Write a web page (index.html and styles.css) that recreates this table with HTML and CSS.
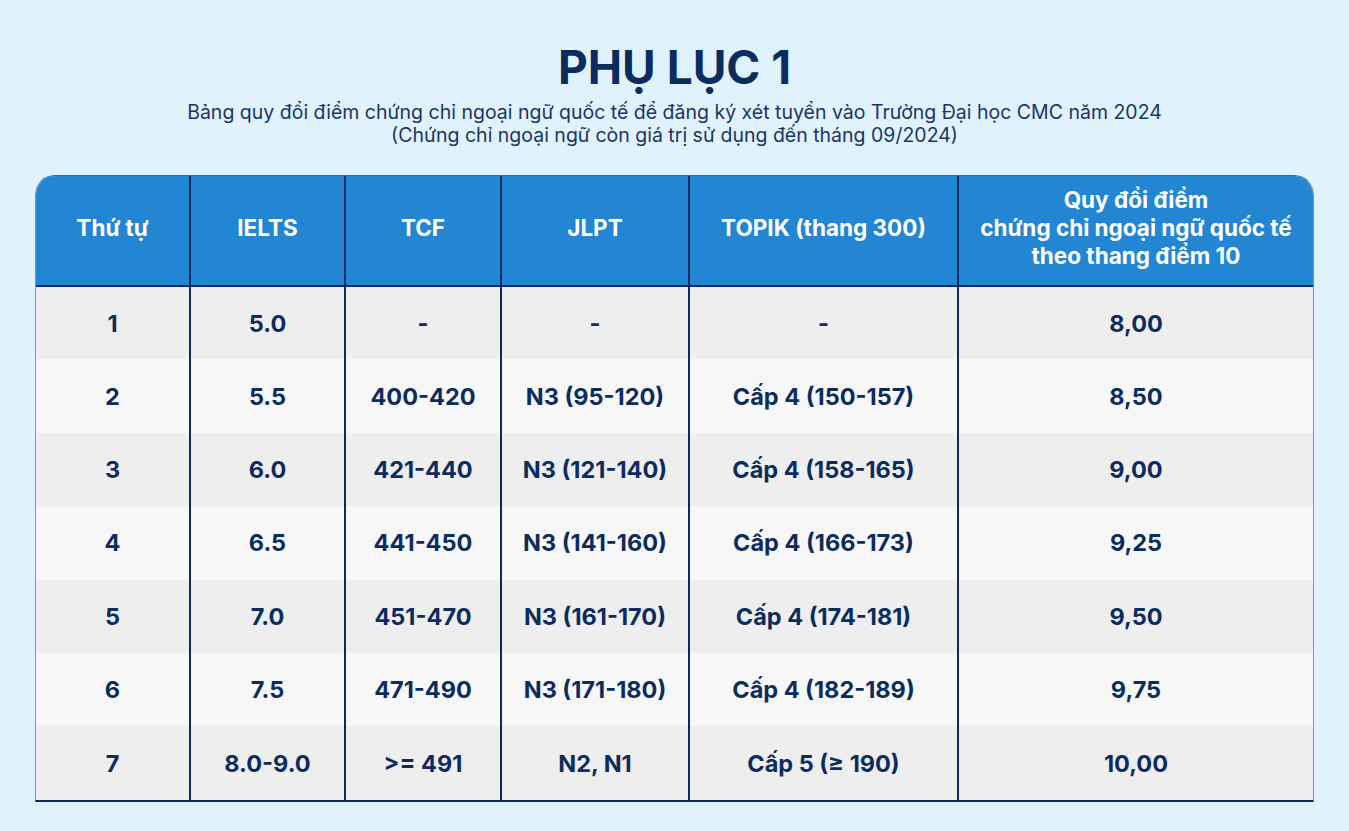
FILE: index.html
```html
<!DOCTYPE html>
<html lang="vi">
<head>
<meta charset="utf-8">
<title>Phụ lục 1</title>
<link rel="stylesheet" href="styles.css">
</head>
<body>
<main class="page">
  <header class="intro">
    <h1 class="title">PHỤ LỤC 1</h1>
    <p class="subtitle">Bảng quy đổi điểm chứng chỉ ngoại ngữ quốc tế để đăng ký xét tuyển vào Trường Đại học CMC năm 2024<br>(Chứng chỉ ngoại ngữ còn giá trị sử dụng đến tháng 09/2024)</p>
  </header>
  <div class="table-wrap">
    <table class="grid">
      <colgroup>
        <col class="c1"><col class="c2"><col class="c3"><col class="c4"><col class="c5"><col class="c6">
      </colgroup>
      <thead>
        <tr>
          <th>Thứ tự</th>
          <th>IELTS</th>
          <th>TCF</th>
          <th>JLPT</th>
          <th>TOPIK (thang 300)</th>
          <th>Quy đổi điểm<br>chứng chỉ ngoại ngữ quốc tế<br>theo thang điểm 10</th>
        </tr>
      </thead>
      <tbody>
        <tr><td>1</td><td>5.0</td><td>-</td><td>-</td><td>-</td><td>8,00</td></tr>
        <tr><td>2</td><td>5.5</td><td>400-420</td><td>N3 (95-120)</td><td>Cấp 4 (150-157)</td><td>8,50</td></tr>
        <tr><td>3</td><td>6.0</td><td>421-440</td><td>N3 (121-140)</td><td>Cấp 4 (158-165)</td><td>9,00</td></tr>
        <tr><td>4</td><td>6.5</td><td>441-450</td><td>N3 (141-160)</td><td>Cấp 4 (166-173)</td><td>9,25</td></tr>
        <tr><td>5</td><td>7.0</td><td>451-470</td><td>N3 (161-170)</td><td>Cấp 4 (174-181)</td><td>9,50</td></tr>
        <tr><td>6</td><td>7.5</td><td>471-490</td><td>N3 (171-180)</td><td>Cấp 4 (182-189)</td><td>9,75</td></tr>
        <tr><td>7</td><td>8.0-9.0</td><td>&gt;= 491</td><td>N2, N1</td><td>Cấp 5 (≥ 190)</td><td>10,00</td></tr>
      </tbody>
    </table>
  </div>
</main>
</body>
</html>
```

FILE: styles.css
```css
* { box-sizing: border-box; }
html, body { margin: 0; padding: 0; }
body {
  background: #e0f2fc;
  font-family: Inter, "Noto Sans", "Liberation Sans", sans-serif;
  color: #0d2c5e;
  width: 1349px;
  height: 831px;
  overflow: hidden;
}
.page {
  display: flex;
  flex-direction: column;
  align-items: center;
  padding-top: 41px;
}
.intro { text-align: center; }
.title {
  margin: 0;
  font-size: 46px;
  line-height: 52px;
  font-weight: 700;
  color: #0d2c5e;
}
.subtitle {
  margin: 8px 0 0;
  font-size: 19.5px;
  line-height: 23px;
  font-weight: 400;
  color: #1b3565;
}
.table-wrap {
  margin-top: 28px;
  width: 1279px;
  border-radius: 20px 20px 0 0;
  overflow: hidden;
  border-left: 1px solid #7f93b2;
  border-right: 1px solid #7f93b2;
  border-bottom: 2px solid #0d2c5e;
  border-top: 1px solid #1c6fb5;
}
.grid {
  width: 100%;
  border-collapse: collapse;
  table-layout: fixed;
}
.c1 { width: 154px; }
.c2 { width: 155px; }
.c3 { width: 156px; }
.c4 { width: 188px; }
.c5 { width: 269px; }
.c6 { width: auto; }
.grid th, .grid td {
  text-align: center;
  vertical-align: middle;
  padding: 0;
  border-left: 2px solid #0d2c5e;
}
.grid th:first-child, .grid td:first-child { border-left: none; }
.grid th {
  background: #2286d2;
  color: #ffffff;
  font-size: 22.5px;
  line-height: 28px;
  font-weight: 700;
  height: 110px;
  padding-bottom: 5px;
  border-bottom: 2px solid #0d2c5e;
}
.grid td {
  height: 73.4px;
  font-size: 23.5px;
  font-weight: 700;
  color: #0d2c5e;
}
.grid tbody tr:nth-child(odd) td { background: #eeeeee; }
.grid tbody tr:nth-child(even) td { background: #f7f7f7; }
```
